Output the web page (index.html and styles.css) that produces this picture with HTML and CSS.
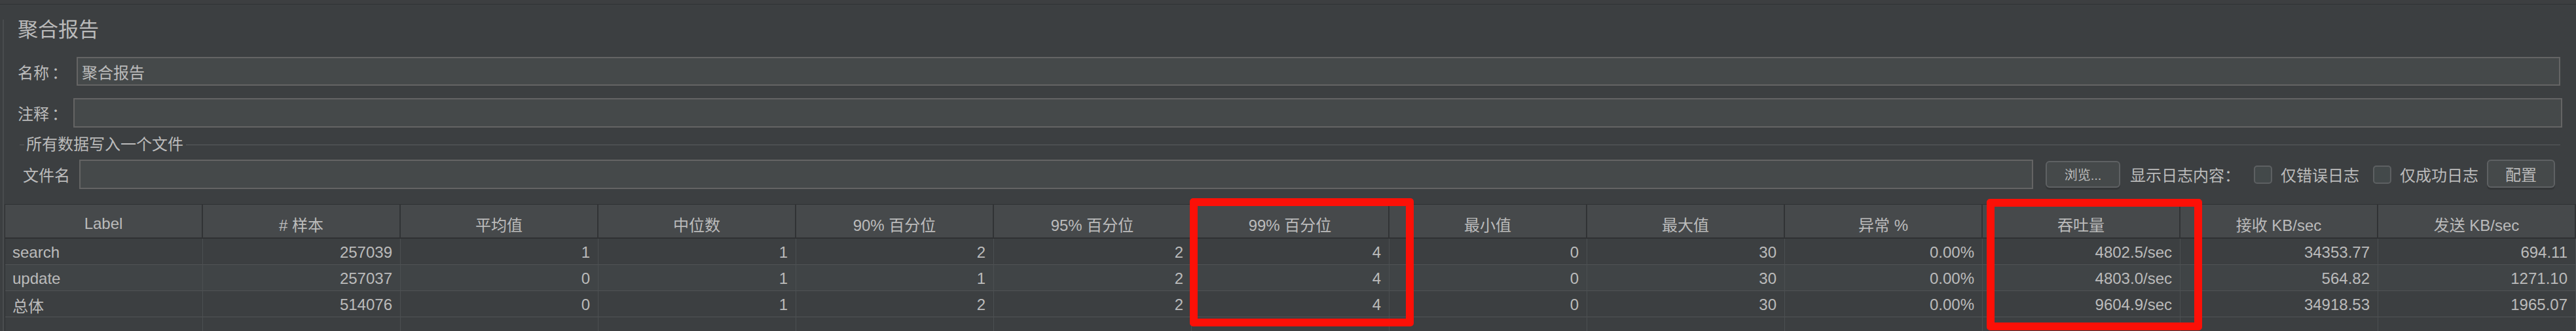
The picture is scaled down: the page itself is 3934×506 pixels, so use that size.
FILE: index.html
```html
<!DOCTYPE html>
<html lang="zh-CN">
<head>
<meta charset="utf-8">
<title>聚合报告</title>
<link rel="stylesheet" href="styles.css">
</head>
<body>
<div class="window">
  <div class="topbar"></div>
  <div class="panel">
    <div class="form">
      <h1 class="title">聚合报告</h1>
      <div class="field field-name">
        <span class="label">名称<span class="colon">：</span></span>
        <div class="textbox">聚合报告</div>
      </div>
      <div class="field field-comment">
        <span class="label">注释<span class="colon">：</span></span>
        <div class="textbox"></div>
      </div>
      <div class="group-title">
        <span class="group-line short"></span>
        <span class="group-text">所有数据写入一个文件</span>
        <span class="group-line long"></span>
      </div>
      <div class="field field-file">
        <span class="label">文件名</span>
        <div class="textbox"></div>
        <button class="btn btn-browse">浏览...</button>
        <span class="log-label">显示日志内容<span class="colon">：</span></span>
        <span class="check"><span class="box"></span><span class="check-text">仅错误日志</span></span>
        <span class="check"><span class="box"></span><span class="check-text">仅成功日志</span></span>
        <button class="btn btn-config">配置</button>
      </div>
    </div>
    <table class="report">
      <colgroup>
        <col class="c"><col class="c"><col class="c"><col class="c"><col class="c"><col class="c"><col class="c"><col class="c"><col class="c"><col class="c"><col class="c"><col class="c"><col class="c">
      </colgroup>
      <thead>
        <tr>
          <th>Label</th><th># 样本</th><th>平均值</th><th>中位数</th><th>90% 百分位</th><th>95% 百分位</th><th>99% 百分位</th><th>最小值</th><th>最大值</th><th>异常 %</th><th>吞吐量</th><th>接收 KB/sec</th><th>发送 KB/sec</th>
        </tr>
      </thead>
      <tbody>
        <tr>
          <td class="name">search</td><td>257039</td><td>1</td><td>1</td><td>2</td><td>2</td><td>4</td><td>0</td><td>30</td><td>0.00%</td><td>4802.5/sec</td><td>34353.77</td><td>694.11</td>
        </tr>
        <tr class="alt">
          <td class="name">update</td><td>257037</td><td>0</td><td>1</td><td>1</td><td>2</td><td>4</td><td>0</td><td>30</td><td>0.00%</td><td>4803.0/sec</td><td>564.82</td><td>1271.10</td>
        </tr>
        <tr>
          <td class="name">总体</td><td>514076</td><td>0</td><td>1</td><td>2</td><td>2</td><td>4</td><td>0</td><td>30</td><td>0.00%</td><td>9604.9/sec</td><td>34918.53</td><td>1965.07</td>
        </tr>
        <tr class="empty">
          <td></td><td></td><td></td><td></td><td></td><td></td><td></td><td></td><td></td><td></td><td></td><td></td><td></td>
        </tr>
      </tbody>
    </table>
  </div>
  <div class="highlight hl-p99"></div>
  <div class="highlight hl-tput"></div>
</div>
</body>
</html>
```

FILE: styles.css
```css
* { box-sizing: border-box; }
html, body { margin: 0; padding: 0; }
body {
  width: 3934px;
  height: 506px;
  overflow: hidden;
  background: #3c3f41;
  color: #bbbbbb;
  font-family: "Liberation Sans", "Noto Sans CJK SC", sans-serif;
}
.window { position: relative; width: 3934px; height: 506px; overflow: hidden; }
.topbar { height: 7px; background: #3d3f41; border-bottom: 1px solid #303234; }
.panel { margin-left: 4px; border-left: 2px solid #494c4e; height: 499px; }
.form { padding-left: 21px; }
.title {
  margin: 23px 0 0;
  height: 31px;
  font-size: 31px;
  line-height: 31px;
  font-weight: normal;
}
.field { display: flex; align-items: center; font-size: 24px; }
.field-name { margin-top: 26px; height: 44px; margin-right: 24px; }
.field-name .label { width: 90px; }
.field-comment { margin-top: 19px; height: 45px; margin-right: 21px; }
.field-comment .label { width: 85px; }
.label { flex: none; white-space: nowrap; }
.colon { font-family: "Noto Sans CJK JP", sans-serif; margin-left: 4px; }
.textbox {
  flex: 1;
  height: 100%;
  background: #45494a;
  border: 2px solid #646464;
  padding-left: 6px;
  display: flex;
  align-items: center;
  white-space: nowrap;
}
.group-title {
  margin-top: 14px;
  margin-left: 3px;
  margin-right: 24px;
  height: 24px;
  display: flex;
  align-items: center;
  font-size: 24px;
}
.group-line { height: 1px; background: #5a5d5f; }
.group-line.short { width: 7px; }
.group-line.long { flex: 1; }
.group-text { margin: 0 4px 0 3px; white-space: nowrap; line-height: 24px; }
.field-file { margin-top: 11px; height: 45px; margin-right: 32px; }
.field-file .label { width: 94px; padding-left: 8px; }
.btn {
  flex: none;
  font-family: inherit;
  color: #bbbbbb;
  background: #45494a;
  border: 2px solid #5e6163;
  border-radius: 6px;
  box-shadow: 0 3px 0 #343638;
  padding: 0;
}
.btn-browse { margin-left: 19px; width: 114px; height: 41px; font-size: 20px; }
.btn-config { margin-left: 13px; width: 104px; height: 43px; font-size: 24px; align-self: flex-start; }
.log-label { margin-left: 15px; white-space: nowrap; }
.log-label .colon { margin-left: 0; }
.check { display: flex; align-items: center; margin-left: 21px; white-space: nowrap; }
.box {
  width: 28px;
  height: 28px;
  border: 2px solid #5d6062;
  border-radius: 5px;
  background: #43494a;
}
.check-text { margin-left: 13px; }

.report {
  margin-top: 23px;
  margin-left: 1px;
  width: 3927px;
  border-collapse: separate;
  border-spacing: 0;
  table-layout: fixed;
  border-left: 1px solid #2f3133;
  font-size: 24px;
}
.report col.c { width: 302px; }
.report th {
  height: 53px;
  background: #46494b;
  border-top: 1px solid #2f3133;
  border-bottom: 2px solid #2f3133;
  border-right: 2px solid #313335;
  padding: 8px 0 0;
  font-weight: normal;
  text-align: center;
  white-space: nowrap;
}
.report td {
  height: 40px;
  border-bottom: 1px solid #505355;
  border-right: 1px solid #4b4f51;
  padding: 3px 12px 0 11px;
  text-align: right;
  white-space: nowrap;
  background: #3c3f41;
}
.report tr.alt td { background: #404446; }
.report td.name { text-align: left; }

.highlight {
  position: absolute;
  border: 12px solid #fc1007;
  border-radius: 5px;
}
.hl-p99 { left: 1817px; top: 303px; width: 342px; height: 196px; }
.hl-tput { left: 3034px; top: 304px; width: 329px; height: 201px; }
```
